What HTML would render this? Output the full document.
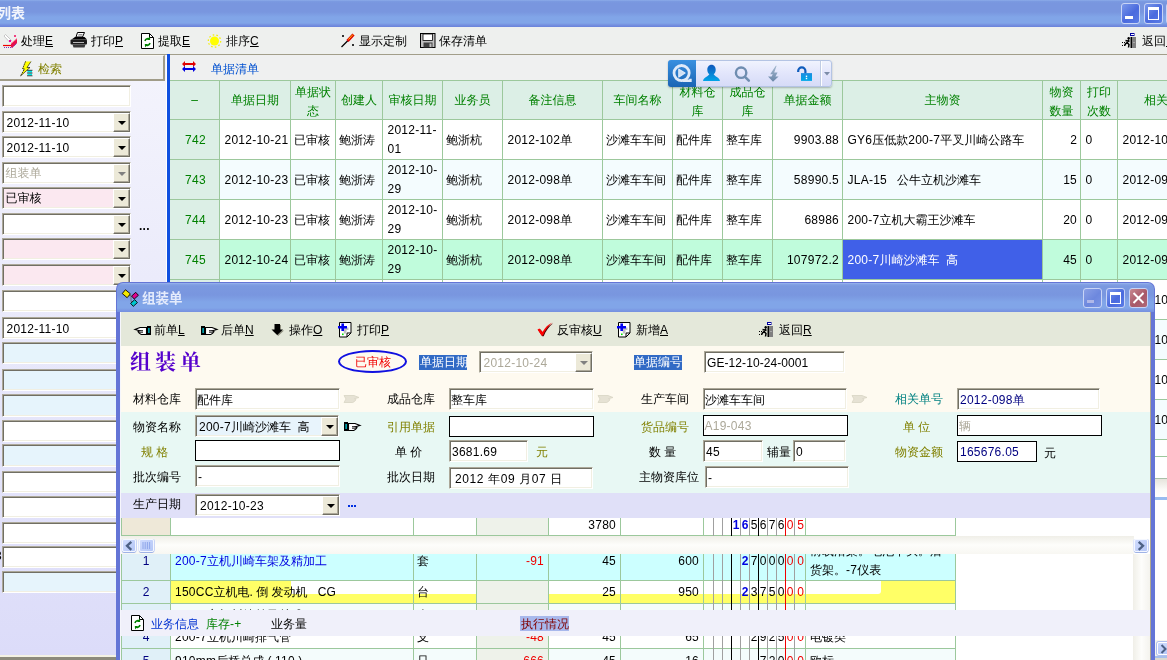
<!DOCTYPE html><html lang="zh"><head><meta charset="utf-8"><title>列表</title><style>
html,body{margin:0;padding:0;}
body{will-change:transform;width:1167px;height:660px;overflow:hidden;position:relative;background:#e0e0fa;
 font-family:"Liberation Sans","WenQuanYi Zen Hei","Noto Sans CJK SC",sans-serif;font-size:12px;color:#000;line-height:14px;}
div{position:absolute;box-sizing:border-box;white-space:nowrap;}
.t{line-height:14px;height:14px;}
u{text-decoration:underline;}
.sunk{border:1px solid;border-color:#aca899 #fff #fff #aca899;box-shadow:inset 1px 1px 0 #716f64,inset -1px -1px 0 #f1efe2;background:#fff;overflow:hidden;}
.flat{border:1px solid #000;background:#fff;overflow:hidden;}
.cb{background:#ece9d8;border:1px solid;border-color:#fff #716f64 #716f64 #fff;box-shadow:inset -1px -1px 0 #aca899;}
.cb:after{content:"";position:absolute;left:3.500px;top:7px;border:4px solid transparent;border-top:4.500px solid #000;border-bottom:0;}
.cb.dis:after{border-top-color:#808080;}
.ft{left:4px;top:3px;}
.ls{}
i{font-style:normal;letter-spacing:.25px;}
span i{letter-spacing:inherit;}
.gh{color:#008000;text-align:center;}
.gc{overflow:hidden;}
svg{position:absolute;overflow:visible;}
</style></head><body>
<div style="left:0px;top:0px;width:1167px;height:27px;background:linear-gradient(#8cace9 0,#7b9ae1 1.500px,#7996df 3px,#7996df 12px,#81a5e8 17px,#81a5e8 23px,#7590e0 25px,#6a82da 27px);"></div>
<div class="t" style="left:-3px;top:5px;font-family:'Liberation Sans','Noto Sans CJK SC',sans-serif;color:#fff;font-weight:bold;font-size:14px;line-height:16px;height:16px;opacity:.9">列表</div>
<div style="left:1121px;top:3px;width:19px;height:21px;background:linear-gradient(135deg,#7a98ea,#4a6ade 55%,#5a7ce6);border:1px solid #c8d4f6;border-radius:3px;"></div>
<div style="left:1125px;top:16px;width:8px;height:3px;background:#fff;"></div>
<div style="left:1144px;top:3px;width:19px;height:21px;background:linear-gradient(135deg,#7a98ea,#4a6ade 55%,#5a7ce6);border:1px solid #c8d4f6;border-radius:3px;"></div>
<div style="left:1148px;top:7px;width:11px;height:13px;border:1px solid #fff;border-top:3px solid #fff;"></div>
<div style="left:1166px;top:3px;width:19px;height:21px;background:linear-gradient(135deg,#c88890,#a85868 55%,#b06878);border:1px solid #c8d4f6;border-radius:3px;"></div>
<svg style="left:1166px;top:3px" width="19" height="21"><path d="M4.500 5 L14.5 16 M14.5 5 L4.500 16" stroke="#fff" stroke-width="2" fill="none"/></svg>
<div style="left:0px;top:27px;width:1167px;height:27px;background:#eef0ee;"></div>
<div style="left:0px;top:54px;width:1167px;height:1px;background:#a29e8a;"></div>
<svg style="left:3px;top:34px" width="15" height="14"><path d="M0 11.500h8" stroke="#f00000" stroke-width="1.200"/><path d="M1 13.500h7" stroke="#8030c0" stroke-width="1.200" stroke-dasharray="1 1"/><path d="M8 9.500L14 4.500V9L9.500 13.500H8z" fill="#e8104c"/><path d="M8 9.500L14 4.500" stroke="#ff80a0" stroke-width="1"/><path d="M9.500 13.500L14 9" stroke="#6020c0" stroke-width="1" stroke-dasharray="1 1"/><path d="M2.500 .5L8.500 6.500 6.500 8 1 2z" fill="#fff" stroke="#b0b0b0" stroke-width=".7"/><rect x="6" y="6" width="2" height="2" fill="#f000a0"/><rect x="11" y="1" width="2" height="2" fill="#f04080"/></svg>
<div class="t" style="left:21px;top:34px;">处理<u>E</u></div>
<svg style="left:70px;top:32px" width="18" height="16"><path d="M6 5L7.500 .5H14.500L12.500 5z" fill="#fff" stroke="#000" stroke-width="1"/><path d="M8.500 2.500h4M8 4h4" stroke="#666" stroke-width=".7"/><path d="M1.500 7.500L5 5h9.500L17 7.500z" fill="#000"/><rect x=".5" y="7.500" width="16.500" height="5" rx="1" fill="#1c1c1c"/><path d="M3 10.500h11" stroke="#b8b8b8" stroke-width="1"/><path d="M2.500 12.500h13l-1 3H3.500z" fill="#3a3a3a"/></svg>
<div class="t" style="left:91px;top:34px;">打印<u>P</u></div>
<svg style="left:141px;top:33px" width="14" height="16"><path d="M.5 .5h8l4 4v11h-12z" fill="#fff" stroke="#000"/><path d="M8.500 .5v4h4" fill="none" stroke="#000"/><path d="M4 8a3 3 0 0 1 5-1.500M9 10a3 3 0 0 1-5 1.500" stroke="#008000" stroke-width="1.600" fill="none"/><path d="M9 3.500v3.500h-3zM4 14.500v-3.500h3z" fill="#008000"/></svg>
<div class="t" style="left:158px;top:34px;">提取<u>E</u></div>
<svg style="left:207px;top:34px" width="15" height="14"><circle cx="7.500" cy="7" r="4.500" fill="#ffff00"/><path d="M10.500 4a4.500 4.500 0 0 1-5.500 7a4.500 4.500 0 0 0 5.500-7z" fill="#808000"/><circle cx="7.500" cy="7" r="6.200" fill="none" stroke="#f4f000" stroke-width="1.200" stroke-dasharray="1.600 2.200"/></svg>
<div class="t" style="left:226px;top:34px;">排序<u>C</u></div>
<svg style="left:341px;top:33px" width="15" height="15"><path d="M0.500 14L7 7.500" stroke="#000" stroke-width="1.300"/><path d="M6.500 8L12.500 1.500" stroke="#e00000" stroke-width="3"/><path d="M7.500 6.500L12 1.500" stroke="#ffd000" stroke-width="1"/><path d="M1 2l2 2M3 2L1 4M11 11l2 2M13 11l-2 2" stroke="#000" stroke-width=".8"/></svg>
<div class="t" style="left:359px;top:34px;">显示定制</div>
<svg style="left:420px;top:33px" width="16" height="15"><rect x=".5" y=".5" width="14.500" height="14" fill="#c0c0c0" stroke="#000"/><rect x="3" y="1" width="9.500" height="6.500" fill="#fff" stroke="#000" stroke-width=".8"/><rect x="3.500" y="9.500" width="9" height="5" fill="#404040"/><rect x="9.500" y="10.500" width="2" height="3.500" fill="#c0c0c0"/></svg>
<div class="t" style="left:439px;top:34px;">保存清单</div>
<svg style="left:1122px;top:33px" width="14" height="15"><rect x="8.500" y=".5" width="3.500" height="2" fill="#fff" stroke="#0000a0"/><rect x="8.500" y="4" width="1.500" height="11" fill="#000"/><rect x="10" y="4" width="4" height="11" fill="#808080"/><rect x="11.500" y="9" width="1" height="1" fill="#d0d0d0"/><circle cx="6.700" cy="5.200" r="1.200" fill="#000"/><path d="M7 6.500L5 9.500M3.500 7.500L7.500 8.500M5 9.500L7 11.500 6.500 14.500M5 9.500L3 11.500 3.500 12.500" stroke="#000" stroke-width="1.500" fill="none"/><path d="M0 9.500h1M2 9.500h1M0 12.500h1M2 12.500h1" stroke="#000"/></svg>
<div class="t" style="left:1142px;top:34px;">返回<u>R</u></div>
<div style="left:0px;top:55px;width:166px;height:605px;background:linear-gradient(#f3f3fc 25px,#dcdcf9 599px);"></div>
<div style="left:0px;top:655px;width:166px;height:2px;background:#f4f2e4;"></div>
<div style="left:0px;top:657px;width:166px;height:3px;background:#8c8a7c;"></div>
<div class="t" style="left:-5px;top:549px;">3</div>
<div style="left:0px;top:55px;width:165px;height:26px;background:#eff0f0;border:1px solid;border-color:#f8f8f4 #a09c88 #a09c88 #f8f8f4;border-width:1px 2px 2px 0"></div>
<svg style="left:19px;top:61px" width="14" height="16"><path d="M6.500 .5H12L8 6.500H11L1.500 15 5.500 8H3.500z" fill="#ffff00"/><path d="M6.500 .5L3.500 8H5.500L1.500 15" fill="none" stroke="#000" stroke-width="1" stroke-dasharray="1.200 1"/><path d="M12 .5L8 6.500H11L1.500 15" fill="none" stroke="#000" stroke-width=".6"/><path d="M8.500 10.500h4.500M8.500 13.500h4.500" stroke="#00e8e8" stroke-width="2"/><path d="M8 9.300h5.500M8 12h5.500M8 14.800h5.500" stroke="#000" stroke-width=".7"/></svg>
<div class="t" style="left:38px;top:62px;color:#808000">检索</div>
<div class="sunk" style="left:2px;top:85px;width:129px;height:22px;background:#fff;"></div>
<div class="sunk" style="left:2px;top:111px;width:129px;height:22px;background:#fff;"><div class="t ft ls" style="left:3.5px;top:4px;color:#000"><i>2012-11-10</i></div><div class="cb" style="right:0;top:1px;width:17px;height:19px"></div></div>
<div class="sunk" style="left:2px;top:136px;width:129px;height:22px;background:#fff;"><div class="t ft ls" style="left:3.5px;top:4px;color:#000"><i>2012-11-10</i></div><div class="cb" style="right:0;top:1px;width:17px;height:19px"></div></div>
<div class="sunk" style="left:2px;top:162px;width:129px;height:22px;background:#fff;"><div class="t ft ls" style="left:2.5px;top:3px;color:#aca899">组装单</div><div class="cb dis" style="right:0;top:1px;width:17px;height:19px"></div></div>
<div class="sunk" style="left:2px;top:187px;width:129px;height:22px;background:#fbe8f0;"><div class="t ft ls" style="left:2.5px;top:3px;color:#000">已审核</div><div class="cb" style="right:0;top:1px;width:17px;height:19px"></div></div>
<div class="sunk" style="left:2px;top:213px;width:129px;height:22px;background:#fff;"><div class="cb" style="right:0;top:1px;width:17px;height:19px"></div></div>
<div class="sunk" style="left:2px;top:238px;width:129px;height:22px;background:#fbe8f0;"><div class="cb" style="right:0;top:1px;width:17px;height:19px"></div></div>
<div class="sunk" style="left:2px;top:264px;width:129px;height:22px;background:#fbe8f0;"><div class="cb" style="right:0;top:1px;width:17px;height:19px"></div></div>
<div class="sunk" style="left:2px;top:290px;width:129px;height:22px;background:#fff;"></div>
<div class="sunk" style="left:2px;top:317px;width:129px;height:22px;background:#fff;"><div class="t ft ls" style="left:3.5px;top:4px;color:#000"><i>2012-11-10</i></div></div>
<div class="sunk" style="left:2px;top:342px;width:129px;height:22px;background:#e6f4fc;"></div>
<div class="sunk" style="left:2px;top:369px;width:129px;height:22px;background:#e6f4fc;"></div>
<div class="sunk" style="left:2px;top:394px;width:129px;height:23px;background:#e6f4fc;"></div>
<div class="sunk" style="left:2px;top:420px;width:129px;height:22px;background:#fff;"></div>
<div class="sunk" style="left:2px;top:444px;width:129px;height:23px;background:#e6f4fc;"></div>
<div class="sunk" style="left:2px;top:471px;width:129px;height:22px;background:#fff;"></div>
<div class="sunk" style="left:2px;top:496px;width:129px;height:22px;background:#fff;"></div>
<div class="sunk" style="left:2px;top:522px;width:129px;height:22px;background:#fff;"></div>
<div class="sunk" style="left:2px;top:546px;width:129px;height:22px;background:#fff;"></div>
<div class="sunk" style="left:2px;top:571px;width:129px;height:22px;background:#e6f4fc;"></div>
<div class="t" style="left:139px;top:219px;font-weight:bold"><i>...</i></div>
<div style="left:166px;top:55px;width:1px;height:605px;background:#fff;"></div>
<div style="left:167px;top:54px;width:3px;height:606px;background:#1050e0;"></div>
<div style="left:170px;top:55px;width:997px;height:25px;background:#eff0f0;"></div>
<svg style="left:182px;top:61px" width="14" height="12"><path d="M3 3h9M3 8h9" stroke-width="2" stroke="#e00000"/><path d="M3 8h9" stroke-width="2" stroke="#0000e0"/><path d="M0 3l3-3v6zM14 3l-3-3v6z" fill="#e00000"/><path d="M0 8l3-3v6zM14 8l-3-3v6z" fill="#0000e0"/></svg>
<div class="t" style="left:211px;top:62px;color:#0050d0">单据清单</div>
<div style="left:170px;top:80px;width:997px;height:580px;background:#fff;"></div>
<div class="gc" style="left:170px;top:80px;width:50px;height:40px;background:#dcefe6;border-right:1px solid #9cc89c;border-bottom:1px solid #9cc89c;border-top:1px solid #9cc89c;"><div class="gh" style="left:0;width:49px;top:10px;line-height:19px;">–</div></div>
<div class="gc" style="left:220px;top:80px;width:71px;height:40px;background:#dcefe6;border-right:1px solid #9cc89c;border-bottom:1px solid #9cc89c;border-top:1px solid #9cc89c;"><div class="gh" style="left:0;width:70px;top:10px;line-height:19px;">单据日期</div></div>
<div class="gc" style="left:291px;top:80px;width:45px;height:40px;background:#dcefe6;border-right:1px solid #9cc89c;border-bottom:1px solid #9cc89c;border-top:1px solid #9cc89c;"><div class="gh" style="left:0;width:44px;top:2px;line-height:19px;">单据状<br>态</div></div>
<div class="gc" style="left:336px;top:80px;width:47px;height:40px;background:#dcefe6;border-right:1px solid #9cc89c;border-bottom:1px solid #9cc89c;border-top:1px solid #9cc89c;"><div class="gh" style="left:0;width:46px;top:10px;line-height:19px;">创建人</div></div>
<div class="gc" style="left:383px;top:80px;width:60px;height:40px;background:#dcefe6;border-right:1px solid #9cc89c;border-bottom:1px solid #9cc89c;border-top:1px solid #9cc89c;"><div class="gh" style="left:0;width:59px;top:10px;line-height:19px;">审核日期</div></div>
<div class="gc" style="left:443px;top:80px;width:60px;height:40px;background:#dcefe6;border-right:1px solid #9cc89c;border-bottom:1px solid #9cc89c;border-top:1px solid #9cc89c;"><div class="gh" style="left:0;width:59px;top:10px;line-height:19px;">业务员</div></div>
<div class="gc" style="left:503px;top:80px;width:100px;height:40px;background:#dcefe6;border-right:1px solid #9cc89c;border-bottom:1px solid #9cc89c;border-top:1px solid #9cc89c;"><div class="gh" style="left:0;width:99px;top:10px;line-height:19px;">备注信息</div></div>
<div class="gc" style="left:603px;top:80px;width:70px;height:40px;background:#dcefe6;border-right:1px solid #9cc89c;border-bottom:1px solid #9cc89c;border-top:1px solid #9cc89c;"><div class="gh" style="left:0;width:69px;top:10px;line-height:19px;">车间名称</div></div>
<div class="gc" style="left:673px;top:80px;width:50px;height:40px;background:#dcefe6;border-right:1px solid #9cc89c;border-bottom:1px solid #9cc89c;border-top:1px solid #9cc89c;"><div class="gh" style="left:0;width:49px;top:2px;line-height:19px;">材料仓<br>库</div></div>
<div class="gc" style="left:723px;top:80px;width:50px;height:40px;background:#dcefe6;border-right:1px solid #9cc89c;border-bottom:1px solid #9cc89c;border-top:1px solid #9cc89c;"><div class="gh" style="left:0;width:49px;top:2px;line-height:19px;">成品仓<br>库</div></div>
<div class="gc" style="left:773px;top:80px;width:70px;height:40px;background:#dcefe6;border-right:1px solid #9cc89c;border-bottom:1px solid #9cc89c;border-top:1px solid #9cc89c;"><div class="gh" style="left:0;width:69px;top:10px;line-height:19px;">单据金额</div></div>
<div class="gc" style="left:843px;top:80px;width:200px;height:40px;background:#dcefe6;border-right:1px solid #9cc89c;border-bottom:1px solid #9cc89c;border-top:1px solid #9cc89c;"><div class="gh" style="left:0;width:199px;top:10px;line-height:19px;">主物资</div></div>
<div class="gc" style="left:1043px;top:80px;width:38px;height:40px;background:#dcefe6;border-right:1px solid #9cc89c;border-bottom:1px solid #9cc89c;border-top:1px solid #9cc89c;"><div class="gh" style="left:0;width:37px;top:2px;line-height:19px;">物资<br>数量</div></div>
<div class="gc" style="left:1081px;top:80px;width:37px;height:40px;background:#dcefe6;border-right:1px solid #9cc89c;border-bottom:1px solid #9cc89c;border-top:1px solid #9cc89c;"><div class="gh" style="left:0;width:36px;top:2px;line-height:19px;">打印<br>次数</div></div>
<div class="gc" style="left:1118px;top:80px;width:101px;height:40px;background:#dcefe6;border-right:1px solid #9cc89c;border-bottom:1px solid #9cc89c;border-top:1px solid #9cc89c;"><div class="gh" style="left:0;width:100px;top:10px;line-height:19px;">相关单号</div></div>
<div class="gc" style="left:170px;top:120px;width:50px;height:40px;background:#dcefe6;border-right:1px solid #9cc89c;border-bottom:1px solid #9cc89c;"><div style="left:0;width:49px;top:10px;line-height:20px;text-align:center;padding-left:2px;color:#008000"><i>742</i></div></div>
<div class="gc" style="left:220px;top:120px;width:71px;height:40px;background:#fff;border-right:1px solid #9cc89c;border-bottom:1px solid #9cc89c;"><div style="left:0;width:70px;top:10px;line-height:20px;text-align:left;padding-left:4.500px;color:#000"><i>2012-10-21</i></div></div>
<div class="gc" style="left:291px;top:120px;width:45px;height:40px;background:#fff;border-right:1px solid #9cc89c;border-bottom:1px solid #9cc89c;"><div style="left:0;width:44px;top:10px;line-height:20px;text-align:left;padding-left:3px;color:#000">已审核</div></div>
<div class="gc" style="left:336px;top:120px;width:47px;height:40px;background:#fff;border-right:1px solid #9cc89c;border-bottom:1px solid #9cc89c;"><div style="left:0;width:46px;top:10px;line-height:20px;text-align:left;padding-left:3px;color:#000">鲍浙涛</div></div>
<div class="gc" style="left:383px;top:120px;width:60px;height:40px;background:#fff;border-right:1px solid #9cc89c;border-bottom:1px solid #9cc89c;"><div style="left:0;width:59px;top:0.5px;line-height:19px;text-align:left;padding-left:4.500px;color:#000"><i>2012-11-</i><br><i>01</i></div></div>
<div class="gc" style="left:443px;top:120px;width:60px;height:40px;background:#fff;border-right:1px solid #9cc89c;border-bottom:1px solid #9cc89c;"><div style="left:0;width:59px;top:10px;line-height:20px;text-align:left;padding-left:3px;color:#000">鲍浙杭</div></div>
<div class="gc" style="left:503px;top:120px;width:100px;height:40px;background:#fff;border-right:1px solid #9cc89c;border-bottom:1px solid #9cc89c;"><div style="left:0;width:99px;top:10px;line-height:20px;text-align:left;padding-left:4.500px;color:#000"><i>2012-102</i>单</div></div>
<div class="gc" style="left:603px;top:120px;width:70px;height:40px;background:#fff;border-right:1px solid #9cc89c;border-bottom:1px solid #9cc89c;"><div style="left:0;width:69px;top:10px;line-height:20px;text-align:left;padding-left:3px;color:#000">沙滩车车间</div></div>
<div class="gc" style="left:673px;top:120px;width:50px;height:40px;background:#fff;border-right:1px solid #9cc89c;border-bottom:1px solid #9cc89c;"><div style="left:0;width:49px;top:10px;line-height:20px;text-align:left;padding-left:3px;color:#000">配件库</div></div>
<div class="gc" style="left:723px;top:120px;width:50px;height:40px;background:#fff;border-right:1px solid #9cc89c;border-bottom:1px solid #9cc89c;"><div style="left:0;width:49px;top:10px;line-height:20px;text-align:left;padding-left:3px;color:#000">整车库</div></div>
<div class="gc" style="left:773px;top:120px;width:70px;height:40px;background:#fff;border-right:1px solid #9cc89c;border-bottom:1px solid #9cc89c;"><div style="left:0;width:69px;top:10px;line-height:20px;text-align:right;padding-right:3px;color:#000"><i>9903.88</i></div></div>
<div class="gc" style="left:843px;top:120px;width:200px;height:40px;background:#fff;border-right:1px solid #9cc89c;border-bottom:1px solid #9cc89c;"><div style="left:0;width:199px;top:10px;line-height:20px;text-align:left;padding-left:4.500px;color:#000"><i>GY6</i>压低款<i>200-7</i>平叉川崎公路车</div></div>
<div class="gc" style="left:1043px;top:120px;width:38px;height:40px;background:#fff;border-right:1px solid #9cc89c;border-bottom:1px solid #9cc89c;"><div style="left:0;width:37px;top:10px;line-height:20px;text-align:right;padding-right:3px;color:#000">2</div></div>
<div class="gc" style="left:1081px;top:120px;width:37px;height:40px;background:#fff;border-right:1px solid #9cc89c;border-bottom:1px solid #9cc89c;"><div style="left:0;width:36px;top:10px;line-height:20px;text-align:left;padding-left:4.500px;color:#000">0</div></div>
<div class="gc" style="left:1118px;top:120px;width:101px;height:40px;background:#fff;border-right:1px solid #9cc89c;border-bottom:1px solid #9cc89c;"><div style="left:0;width:100px;top:10px;line-height:20px;text-align:left;padding-left:4.500px;color:#000"><i>2012-10</i></div></div>
<div class="gc" style="left:170px;top:160px;width:50px;height:40px;background:#dcefe6;border-right:1px solid #9cc89c;border-bottom:1px solid #9cc89c;"><div style="left:0;width:49px;top:10px;line-height:20px;text-align:center;padding-left:2px;color:#008000"><i>743</i></div></div>
<div class="gc" style="left:220px;top:160px;width:71px;height:40px;background:#f4fcfe;border-right:1px solid #9cc89c;border-bottom:1px solid #9cc89c;"><div style="left:0;width:70px;top:10px;line-height:20px;text-align:left;padding-left:4.500px;color:#000"><i>2012-10-23</i></div></div>
<div class="gc" style="left:291px;top:160px;width:45px;height:40px;background:#f4fcfe;border-right:1px solid #9cc89c;border-bottom:1px solid #9cc89c;"><div style="left:0;width:44px;top:10px;line-height:20px;text-align:left;padding-left:3px;color:#000">已审核</div></div>
<div class="gc" style="left:336px;top:160px;width:47px;height:40px;background:#f4fcfe;border-right:1px solid #9cc89c;border-bottom:1px solid #9cc89c;"><div style="left:0;width:46px;top:10px;line-height:20px;text-align:left;padding-left:3px;color:#000">鲍浙涛</div></div>
<div class="gc" style="left:383px;top:160px;width:60px;height:40px;background:#f4fcfe;border-right:1px solid #9cc89c;border-bottom:1px solid #9cc89c;"><div style="left:0;width:59px;top:0.5px;line-height:19px;text-align:left;padding-left:4.500px;color:#000"><i>2012-10-</i><br><i>29</i></div></div>
<div class="gc" style="left:443px;top:160px;width:60px;height:40px;background:#f4fcfe;border-right:1px solid #9cc89c;border-bottom:1px solid #9cc89c;"><div style="left:0;width:59px;top:10px;line-height:20px;text-align:left;padding-left:3px;color:#000">鲍浙杭</div></div>
<div class="gc" style="left:503px;top:160px;width:100px;height:40px;background:#f4fcfe;border-right:1px solid #9cc89c;border-bottom:1px solid #9cc89c;"><div style="left:0;width:99px;top:10px;line-height:20px;text-align:left;padding-left:4.500px;color:#000"><i>2012-098</i>单</div></div>
<div class="gc" style="left:603px;top:160px;width:70px;height:40px;background:#f4fcfe;border-right:1px solid #9cc89c;border-bottom:1px solid #9cc89c;"><div style="left:0;width:69px;top:10px;line-height:20px;text-align:left;padding-left:3px;color:#000">沙滩车车间</div></div>
<div class="gc" style="left:673px;top:160px;width:50px;height:40px;background:#f4fcfe;border-right:1px solid #9cc89c;border-bottom:1px solid #9cc89c;"><div style="left:0;width:49px;top:10px;line-height:20px;text-align:left;padding-left:3px;color:#000">配件库</div></div>
<div class="gc" style="left:723px;top:160px;width:50px;height:40px;background:#f4fcfe;border-right:1px solid #9cc89c;border-bottom:1px solid #9cc89c;"><div style="left:0;width:49px;top:10px;line-height:20px;text-align:left;padding-left:3px;color:#000">整车库</div></div>
<div class="gc" style="left:773px;top:160px;width:70px;height:40px;background:#f4fcfe;border-right:1px solid #9cc89c;border-bottom:1px solid #9cc89c;"><div style="left:0;width:69px;top:10px;line-height:20px;text-align:right;padding-right:3px;color:#000"><i>58990.5</i></div></div>
<div class="gc" style="left:843px;top:160px;width:200px;height:40px;background:#f4fcfe;border-right:1px solid #9cc89c;border-bottom:1px solid #9cc89c;"><div style="left:0;width:199px;top:10px;line-height:20px;text-align:left;padding-left:4.500px;color:#000"><i>JLA-15</i> &nbsp; 公牛立机沙滩车</div></div>
<div class="gc" style="left:1043px;top:160px;width:38px;height:40px;background:#f4fcfe;border-right:1px solid #9cc89c;border-bottom:1px solid #9cc89c;"><div style="left:0;width:37px;top:10px;line-height:20px;text-align:right;padding-right:3px;color:#000"><i>15</i></div></div>
<div class="gc" style="left:1081px;top:160px;width:37px;height:40px;background:#f4fcfe;border-right:1px solid #9cc89c;border-bottom:1px solid #9cc89c;"><div style="left:0;width:36px;top:10px;line-height:20px;text-align:left;padding-left:4.500px;color:#000">0</div></div>
<div class="gc" style="left:1118px;top:160px;width:101px;height:40px;background:#f4fcfe;border-right:1px solid #9cc89c;border-bottom:1px solid #9cc89c;"><div style="left:0;width:100px;top:10px;line-height:20px;text-align:left;padding-left:4.500px;color:#000"><i>2012-09</i></div></div>
<div class="gc" style="left:170px;top:200px;width:50px;height:40px;background:#dcefe6;border-right:1px solid #9cc89c;border-bottom:1px solid #9cc89c;"><div style="left:0;width:49px;top:10px;line-height:20px;text-align:center;padding-left:2px;color:#008000"><i>744</i></div></div>
<div class="gc" style="left:220px;top:200px;width:71px;height:40px;background:#fff;border-right:1px solid #9cc89c;border-bottom:1px solid #9cc89c;"><div style="left:0;width:70px;top:10px;line-height:20px;text-align:left;padding-left:4.500px;color:#000"><i>2012-10-23</i></div></div>
<div class="gc" style="left:291px;top:200px;width:45px;height:40px;background:#fff;border-right:1px solid #9cc89c;border-bottom:1px solid #9cc89c;"><div style="left:0;width:44px;top:10px;line-height:20px;text-align:left;padding-left:3px;color:#000">已审核</div></div>
<div class="gc" style="left:336px;top:200px;width:47px;height:40px;background:#fff;border-right:1px solid #9cc89c;border-bottom:1px solid #9cc89c;"><div style="left:0;width:46px;top:10px;line-height:20px;text-align:left;padding-left:3px;color:#000">鲍浙涛</div></div>
<div class="gc" style="left:383px;top:200px;width:60px;height:40px;background:#fff;border-right:1px solid #9cc89c;border-bottom:1px solid #9cc89c;"><div style="left:0;width:59px;top:0.5px;line-height:19px;text-align:left;padding-left:4.500px;color:#000"><i>2012-10-</i><br><i>29</i></div></div>
<div class="gc" style="left:443px;top:200px;width:60px;height:40px;background:#fff;border-right:1px solid #9cc89c;border-bottom:1px solid #9cc89c;"><div style="left:0;width:59px;top:10px;line-height:20px;text-align:left;padding-left:3px;color:#000">鲍浙杭</div></div>
<div class="gc" style="left:503px;top:200px;width:100px;height:40px;background:#fff;border-right:1px solid #9cc89c;border-bottom:1px solid #9cc89c;"><div style="left:0;width:99px;top:10px;line-height:20px;text-align:left;padding-left:4.500px;color:#000"><i>2012-098</i>单</div></div>
<div class="gc" style="left:603px;top:200px;width:70px;height:40px;background:#fff;border-right:1px solid #9cc89c;border-bottom:1px solid #9cc89c;"><div style="left:0;width:69px;top:10px;line-height:20px;text-align:left;padding-left:3px;color:#000">沙滩车车间</div></div>
<div class="gc" style="left:673px;top:200px;width:50px;height:40px;background:#fff;border-right:1px solid #9cc89c;border-bottom:1px solid #9cc89c;"><div style="left:0;width:49px;top:10px;line-height:20px;text-align:left;padding-left:3px;color:#000">配件库</div></div>
<div class="gc" style="left:723px;top:200px;width:50px;height:40px;background:#fff;border-right:1px solid #9cc89c;border-bottom:1px solid #9cc89c;"><div style="left:0;width:49px;top:10px;line-height:20px;text-align:left;padding-left:3px;color:#000">整车库</div></div>
<div class="gc" style="left:773px;top:200px;width:70px;height:40px;background:#fff;border-right:1px solid #9cc89c;border-bottom:1px solid #9cc89c;"><div style="left:0;width:69px;top:10px;line-height:20px;text-align:right;padding-right:3px;color:#000"><i>68986</i></div></div>
<div class="gc" style="left:843px;top:200px;width:200px;height:40px;background:#fff;border-right:1px solid #9cc89c;border-bottom:1px solid #9cc89c;"><div style="left:0;width:199px;top:10px;line-height:20px;text-align:left;padding-left:4.500px;color:#000"><i>200-7</i>立机大霸王沙滩车</div></div>
<div class="gc" style="left:1043px;top:200px;width:38px;height:40px;background:#fff;border-right:1px solid #9cc89c;border-bottom:1px solid #9cc89c;"><div style="left:0;width:37px;top:10px;line-height:20px;text-align:right;padding-right:3px;color:#000"><i>20</i></div></div>
<div class="gc" style="left:1081px;top:200px;width:37px;height:40px;background:#fff;border-right:1px solid #9cc89c;border-bottom:1px solid #9cc89c;"><div style="left:0;width:36px;top:10px;line-height:20px;text-align:left;padding-left:4.500px;color:#000">0</div></div>
<div class="gc" style="left:1118px;top:200px;width:101px;height:40px;background:#fff;border-right:1px solid #9cc89c;border-bottom:1px solid #9cc89c;"><div style="left:0;width:100px;top:10px;line-height:20px;text-align:left;padding-left:4.500px;color:#000"><i>2012-09</i></div></div>
<div class="gc" style="left:170px;top:240px;width:50px;height:40px;background:#dcefe6;border-right:1px solid #9cc89c;border-bottom:1px solid #9cc89c;"><div style="left:0;width:49px;top:10px;line-height:20px;text-align:center;padding-left:2px;color:#008000"><i>745</i></div></div>
<div class="gc" style="left:220px;top:240px;width:71px;height:40px;background:#c0fcdc;border-right:1px solid #9cc89c;border-bottom:1px solid #9cc89c;"><div style="left:0;width:70px;top:10px;line-height:20px;text-align:left;padding-left:4.500px;color:#000"><i>2012-10-24</i></div></div>
<div class="gc" style="left:291px;top:240px;width:45px;height:40px;background:#c0fcdc;border-right:1px solid #9cc89c;border-bottom:1px solid #9cc89c;"><div style="left:0;width:44px;top:10px;line-height:20px;text-align:left;padding-left:3px;color:#000">已审核</div></div>
<div class="gc" style="left:336px;top:240px;width:47px;height:40px;background:#c0fcdc;border-right:1px solid #9cc89c;border-bottom:1px solid #9cc89c;"><div style="left:0;width:46px;top:10px;line-height:20px;text-align:left;padding-left:3px;color:#000">鲍浙涛</div></div>
<div class="gc" style="left:383px;top:240px;width:60px;height:40px;background:#c0fcdc;border-right:1px solid #9cc89c;border-bottom:1px solid #9cc89c;"><div style="left:0;width:59px;top:0.5px;line-height:19px;text-align:left;padding-left:4.500px;color:#000"><i>2012-10-</i><br><i>29</i></div></div>
<div class="gc" style="left:443px;top:240px;width:60px;height:40px;background:#c0fcdc;border-right:1px solid #9cc89c;border-bottom:1px solid #9cc89c;"><div style="left:0;width:59px;top:10px;line-height:20px;text-align:left;padding-left:3px;color:#000">鲍浙杭</div></div>
<div class="gc" style="left:503px;top:240px;width:100px;height:40px;background:#c0fcdc;border-right:1px solid #9cc89c;border-bottom:1px solid #9cc89c;"><div style="left:0;width:99px;top:10px;line-height:20px;text-align:left;padding-left:4.500px;color:#000"><i>2012-098</i>单</div></div>
<div class="gc" style="left:603px;top:240px;width:70px;height:40px;background:#c0fcdc;border-right:1px solid #9cc89c;border-bottom:1px solid #9cc89c;"><div style="left:0;width:69px;top:10px;line-height:20px;text-align:left;padding-left:3px;color:#000">沙滩车车间</div></div>
<div class="gc" style="left:673px;top:240px;width:50px;height:40px;background:#c0fcdc;border-right:1px solid #9cc89c;border-bottom:1px solid #9cc89c;"><div style="left:0;width:49px;top:10px;line-height:20px;text-align:left;padding-left:3px;color:#000">配件库</div></div>
<div class="gc" style="left:723px;top:240px;width:50px;height:40px;background:#c0fcdc;border-right:1px solid #9cc89c;border-bottom:1px solid #9cc89c;"><div style="left:0;width:49px;top:10px;line-height:20px;text-align:left;padding-left:3px;color:#000">整车库</div></div>
<div class="gc" style="left:773px;top:240px;width:70px;height:40px;background:#c0fcdc;border-right:1px solid #9cc89c;border-bottom:1px solid #9cc89c;"><div style="left:0;width:69px;top:10px;line-height:20px;text-align:right;padding-right:3px;color:#000"><i>107972.2</i></div></div>
<div class="gc" style="left:843px;top:240px;width:200px;height:40px;background:#4060e8;border-right:1px solid #9cc89c;border-bottom:1px solid #9cc89c;"><div style="left:0;width:199px;top:10px;line-height:20px;text-align:left;padding-left:4.500px;color:#fff"><i>200-7</i>川崎沙滩车 &nbsp;高</div></div>
<div class="gc" style="left:1043px;top:240px;width:38px;height:40px;background:#c0fcdc;border-right:1px solid #9cc89c;border-bottom:1px solid #9cc89c;"><div style="left:0;width:37px;top:10px;line-height:20px;text-align:right;padding-right:3px;color:#000"><i>45</i></div></div>
<div class="gc" style="left:1081px;top:240px;width:37px;height:40px;background:#c0fcdc;border-right:1px solid #9cc89c;border-bottom:1px solid #9cc89c;"><div style="left:0;width:36px;top:10px;line-height:20px;text-align:left;padding-left:4.500px;color:#000">0</div></div>
<div class="gc" style="left:1118px;top:240px;width:101px;height:40px;background:#c0fcdc;border-right:1px solid #9cc89c;border-bottom:1px solid #9cc89c;"><div style="left:0;width:100px;top:10px;line-height:20px;text-align:left;padding-left:4.500px;color:#000"><i>2012-09</i></div></div>
<div class="gc" style="left:170px;top:280px;width:50px;height:40px;background:#dcefe6;border-right:1px solid #9cc89c;border-bottom:1px solid #9cc89c;"></div>
<div class="gc" style="left:220px;top:280px;width:71px;height:40px;background:#fff;border-right:1px solid #9cc89c;border-bottom:1px solid #9cc89c;"></div>
<div class="gc" style="left:291px;top:280px;width:45px;height:40px;background:#fff;border-right:1px solid #9cc89c;border-bottom:1px solid #9cc89c;"></div>
<div class="gc" style="left:336px;top:280px;width:47px;height:40px;background:#fff;border-right:1px solid #9cc89c;border-bottom:1px solid #9cc89c;"></div>
<div class="gc" style="left:383px;top:280px;width:60px;height:40px;background:#fff;border-right:1px solid #9cc89c;border-bottom:1px solid #9cc89c;"></div>
<div class="gc" style="left:443px;top:280px;width:60px;height:40px;background:#fff;border-right:1px solid #9cc89c;border-bottom:1px solid #9cc89c;"></div>
<div class="gc" style="left:503px;top:280px;width:100px;height:40px;background:#fff;border-right:1px solid #9cc89c;border-bottom:1px solid #9cc89c;"></div>
<div class="gc" style="left:603px;top:280px;width:70px;height:40px;background:#fff;border-right:1px solid #9cc89c;border-bottom:1px solid #9cc89c;"></div>
<div class="gc" style="left:673px;top:280px;width:50px;height:40px;background:#fff;border-right:1px solid #9cc89c;border-bottom:1px solid #9cc89c;"></div>
<div class="gc" style="left:723px;top:280px;width:50px;height:40px;background:#fff;border-right:1px solid #9cc89c;border-bottom:1px solid #9cc89c;"></div>
<div class="gc" style="left:773px;top:280px;width:70px;height:40px;background:#fff;border-right:1px solid #9cc89c;border-bottom:1px solid #9cc89c;"></div>
<div class="gc" style="left:843px;top:280px;width:200px;height:40px;background:#fff;border-right:1px solid #9cc89c;border-bottom:1px solid #9cc89c;"></div>
<div class="gc" style="left:1043px;top:280px;width:38px;height:40px;background:#fff;border-right:1px solid #9cc89c;border-bottom:1px solid #9cc89c;"></div>
<div class="gc" style="left:1081px;top:280px;width:37px;height:40px;background:#fff;border-right:1px solid #9cc89c;border-bottom:1px solid #9cc89c;"></div>
<div class="gc" style="left:1118px;top:280px;width:101px;height:40px;background:#fff;border-right:1px solid #9cc89c;border-bottom:1px solid #9cc89c;"><div style="left:0;top:10px;line-height:20px;padding-left:4.500px;"><i>2012-10</i></div></div>
<div class="gc" style="left:170px;top:320px;width:50px;height:40px;background:#dcefe6;border-right:1px solid #9cc89c;border-bottom:1px solid #9cc89c;"></div>
<div class="gc" style="left:220px;top:320px;width:71px;height:40px;background:#f4fcfe;border-right:1px solid #9cc89c;border-bottom:1px solid #9cc89c;"></div>
<div class="gc" style="left:291px;top:320px;width:45px;height:40px;background:#f4fcfe;border-right:1px solid #9cc89c;border-bottom:1px solid #9cc89c;"></div>
<div class="gc" style="left:336px;top:320px;width:47px;height:40px;background:#f4fcfe;border-right:1px solid #9cc89c;border-bottom:1px solid #9cc89c;"></div>
<div class="gc" style="left:383px;top:320px;width:60px;height:40px;background:#f4fcfe;border-right:1px solid #9cc89c;border-bottom:1px solid #9cc89c;"></div>
<div class="gc" style="left:443px;top:320px;width:60px;height:40px;background:#f4fcfe;border-right:1px solid #9cc89c;border-bottom:1px solid #9cc89c;"></div>
<div class="gc" style="left:503px;top:320px;width:100px;height:40px;background:#f4fcfe;border-right:1px solid #9cc89c;border-bottom:1px solid #9cc89c;"></div>
<div class="gc" style="left:603px;top:320px;width:70px;height:40px;background:#f4fcfe;border-right:1px solid #9cc89c;border-bottom:1px solid #9cc89c;"></div>
<div class="gc" style="left:673px;top:320px;width:50px;height:40px;background:#f4fcfe;border-right:1px solid #9cc89c;border-bottom:1px solid #9cc89c;"></div>
<div class="gc" style="left:723px;top:320px;width:50px;height:40px;background:#f4fcfe;border-right:1px solid #9cc89c;border-bottom:1px solid #9cc89c;"></div>
<div class="gc" style="left:773px;top:320px;width:70px;height:40px;background:#f4fcfe;border-right:1px solid #9cc89c;border-bottom:1px solid #9cc89c;"></div>
<div class="gc" style="left:843px;top:320px;width:200px;height:40px;background:#f4fcfe;border-right:1px solid #9cc89c;border-bottom:1px solid #9cc89c;"></div>
<div class="gc" style="left:1043px;top:320px;width:38px;height:40px;background:#f4fcfe;border-right:1px solid #9cc89c;border-bottom:1px solid #9cc89c;"></div>
<div class="gc" style="left:1081px;top:320px;width:37px;height:40px;background:#f4fcfe;border-right:1px solid #9cc89c;border-bottom:1px solid #9cc89c;"></div>
<div class="gc" style="left:1118px;top:320px;width:101px;height:40px;background:#f4fcfe;border-right:1px solid #9cc89c;border-bottom:1px solid #9cc89c;"><div style="left:0;top:10px;line-height:20px;padding-left:4.500px;"><i>2012-10</i></div></div>
<div class="gc" style="left:170px;top:360px;width:50px;height:40px;background:#dcefe6;border-right:1px solid #9cc89c;border-bottom:1px solid #9cc89c;"></div>
<div class="gc" style="left:220px;top:360px;width:71px;height:40px;background:#fff;border-right:1px solid #9cc89c;border-bottom:1px solid #9cc89c;"></div>
<div class="gc" style="left:291px;top:360px;width:45px;height:40px;background:#fff;border-right:1px solid #9cc89c;border-bottom:1px solid #9cc89c;"></div>
<div class="gc" style="left:336px;top:360px;width:47px;height:40px;background:#fff;border-right:1px solid #9cc89c;border-bottom:1px solid #9cc89c;"></div>
<div class="gc" style="left:383px;top:360px;width:60px;height:40px;background:#fff;border-right:1px solid #9cc89c;border-bottom:1px solid #9cc89c;"></div>
<div class="gc" style="left:443px;top:360px;width:60px;height:40px;background:#fff;border-right:1px solid #9cc89c;border-bottom:1px solid #9cc89c;"></div>
<div class="gc" style="left:503px;top:360px;width:100px;height:40px;background:#fff;border-right:1px solid #9cc89c;border-bottom:1px solid #9cc89c;"></div>
<div class="gc" style="left:603px;top:360px;width:70px;height:40px;background:#fff;border-right:1px solid #9cc89c;border-bottom:1px solid #9cc89c;"></div>
<div class="gc" style="left:673px;top:360px;width:50px;height:40px;background:#fff;border-right:1px solid #9cc89c;border-bottom:1px solid #9cc89c;"></div>
<div class="gc" style="left:723px;top:360px;width:50px;height:40px;background:#fff;border-right:1px solid #9cc89c;border-bottom:1px solid #9cc89c;"></div>
<div class="gc" style="left:773px;top:360px;width:70px;height:40px;background:#fff;border-right:1px solid #9cc89c;border-bottom:1px solid #9cc89c;"></div>
<div class="gc" style="left:843px;top:360px;width:200px;height:40px;background:#fff;border-right:1px solid #9cc89c;border-bottom:1px solid #9cc89c;"></div>
<div class="gc" style="left:1043px;top:360px;width:38px;height:40px;background:#fff;border-right:1px solid #9cc89c;border-bottom:1px solid #9cc89c;"></div>
<div class="gc" style="left:1081px;top:360px;width:37px;height:40px;background:#fff;border-right:1px solid #9cc89c;border-bottom:1px solid #9cc89c;"></div>
<div class="gc" style="left:1118px;top:360px;width:101px;height:40px;background:#fff;border-right:1px solid #9cc89c;border-bottom:1px solid #9cc89c;"><div style="left:0;top:10px;line-height:20px;padding-left:4.500px;"><i>2012-10</i></div></div>
<div class="gc" style="left:170px;top:400px;width:50px;height:40px;background:#dcefe6;border-right:1px solid #9cc89c;border-bottom:1px solid #9cc89c;"></div>
<div class="gc" style="left:220px;top:400px;width:71px;height:40px;background:#f4fcfe;border-right:1px solid #9cc89c;border-bottom:1px solid #9cc89c;"></div>
<div class="gc" style="left:291px;top:400px;width:45px;height:40px;background:#f4fcfe;border-right:1px solid #9cc89c;border-bottom:1px solid #9cc89c;"></div>
<div class="gc" style="left:336px;top:400px;width:47px;height:40px;background:#f4fcfe;border-right:1px solid #9cc89c;border-bottom:1px solid #9cc89c;"></div>
<div class="gc" style="left:383px;top:400px;width:60px;height:40px;background:#f4fcfe;border-right:1px solid #9cc89c;border-bottom:1px solid #9cc89c;"></div>
<div class="gc" style="left:443px;top:400px;width:60px;height:40px;background:#f4fcfe;border-right:1px solid #9cc89c;border-bottom:1px solid #9cc89c;"></div>
<div class="gc" style="left:503px;top:400px;width:100px;height:40px;background:#f4fcfe;border-right:1px solid #9cc89c;border-bottom:1px solid #9cc89c;"></div>
<div class="gc" style="left:603px;top:400px;width:70px;height:40px;background:#f4fcfe;border-right:1px solid #9cc89c;border-bottom:1px solid #9cc89c;"></div>
<div class="gc" style="left:673px;top:400px;width:50px;height:40px;background:#f4fcfe;border-right:1px solid #9cc89c;border-bottom:1px solid #9cc89c;"></div>
<div class="gc" style="left:723px;top:400px;width:50px;height:40px;background:#f4fcfe;border-right:1px solid #9cc89c;border-bottom:1px solid #9cc89c;"></div>
<div class="gc" style="left:773px;top:400px;width:70px;height:40px;background:#f4fcfe;border-right:1px solid #9cc89c;border-bottom:1px solid #9cc89c;"></div>
<div class="gc" style="left:843px;top:400px;width:200px;height:40px;background:#f4fcfe;border-right:1px solid #9cc89c;border-bottom:1px solid #9cc89c;"></div>
<div class="gc" style="left:1043px;top:400px;width:38px;height:40px;background:#f4fcfe;border-right:1px solid #9cc89c;border-bottom:1px solid #9cc89c;"></div>
<div class="gc" style="left:1081px;top:400px;width:37px;height:40px;background:#f4fcfe;border-right:1px solid #9cc89c;border-bottom:1px solid #9cc89c;"></div>
<div class="gc" style="left:1118px;top:400px;width:101px;height:40px;background:#f4fcfe;border-right:1px solid #9cc89c;border-bottom:1px solid #9cc89c;"><div style="left:0;top:10px;line-height:20px;padding-left:4.500px;"><i>2012-10</i></div></div>
<div style="left:1117px;top:440px;width:60px;height:17px;border-bottom:1px solid #9cc89c;background:#fff"></div>
<div style="left:1117px;top:457px;width:60px;height:22px;background:#fff;border-bottom:1px solid #a8c0a8"></div>
<div style="left:1117px;top:479px;width:60px;height:18px;background:linear-gradient(#e6e4dc,#fbfbf8 60%,#fff);"></div>
<div style="left:1117px;top:497px;width:60px;height:3px;background:#98bcf0"></div>
<div style="left:1117px;top:500px;width:60px;height:160px;background:#fff"></div>
<div style="left:1155px;top:640px;width:12px;height:20px;background:#f6f5ee;"></div>
<div style="left:1157px;top:642px;width:14px;height:13px;background:linear-gradient(#cad8fd,#b8c9f8);border:1px solid #fff;border-radius:2px;box-shadow:0 0 0 1px #b0c0f0"></div>
<svg style="left:1160px;top:644px" width="8" height="10"><path d="M1.500 1L5.500 5 1.500 9" stroke="#4d6185" stroke-width="2" fill="none"/></svg>
<div style="left:1155px;top:656px;width:12px;height:2px;background:#a8c0ec"></div>
<div style="left:1155px;top:658px;width:12px;height:2px;background:#dcdad0"></div>
<div style="left:668px;top:60px;width:164px;height:27px;background:linear-gradient(#f0f3fe,#e2e5fb 50%,#d6dbf7);border:1px solid #b4c4e4;border-radius:3px;box-shadow:0 1px 2px rgba(0,0,0,.25);"></div>
<div style="left:668px;top:60px;width:28px;height:27px;background:linear-gradient(#3990e0,#1a64b4);border-radius:3px 0 0 3px;"></div>
<svg style="left:672px;top:63px" width="20" height="20"><circle cx="9.600" cy="10.100" r="7.600" fill="none" stroke="#dfeaf9" stroke-width="2.800"/><path d="M6.800 6.200l6.200 3.900-6.200 3.900z" fill="#cfe0f5" stroke="#dfeaf9" stroke-width="1.200" stroke-linejoin="round"/><path d="M11 17.800h7.500v-2" stroke="#dfeaf9" stroke-width="2.400" fill="none"/></svg>
<svg style="left:702px;top:64px" width="20" height="18"><defs><linearGradient id="ug" x1="0" y1="0" x2="0" y2="1"><stop offset="0" stop-color="#0f58bc"/><stop offset="1" stop-color="#00a4e8"/></linearGradient></defs><path d="M9.500 .8C12 .8 13.700 3 13.700 5.800 13.700 8 12.800 9.500 11.700 10.300 13 12.800 17 13 18 17H1C2 13 6 12.800 7.300 10.300 6.200 9.500 5.300 8 5.300 5.800 5.300 3 7 .8 9.500 .8z" fill="url(#ug)"/></svg>
<svg style="left:733px;top:65px" width="18" height="18"><circle cx="8.100" cy="7.700" r="5.200" fill="none" stroke="#6f8db0" stroke-width="2.400"/><path d="M12 11.800l3.800 3.800" stroke="#6f8db0" stroke-width="2.600" stroke-linecap="round"/></svg>
<svg style="left:767px;top:65px" width="13" height="18"><defs><linearGradient id="bg1" x1="0" y1="0" x2="0" y2="1"><stop offset="0" stop-color="#a4b8ce"/><stop offset="1" stop-color="#6a86a8"/></linearGradient></defs><path d="M8.800 .8L3.200 9.300H5.800L4.600 11.400H1L6 16.800 11.600 11.400H8.400L10.600 7.600H7.200L9.600 .8z" fill="url(#bg1)"/></svg>
<svg style="left:796px;top:64px" width="18" height="20"><defs><linearGradient id="lg1" x1="0" y1="0" x2="0" y2="1"><stop offset="0" stop-color="#1c8ce0"/><stop offset="1" stop-color="#00a8e8"/></linearGradient></defs><path d="M2.200 8V7A3.600 3.600 0 0 1 9.400 7V9.500" fill="none" stroke="#0f5cbc" stroke-width="2.200"/><rect x="5" y="9.100" width="11" height="7.800" fill="url(#lg1)"/><rect x="9.800" y="11.600" width="1.400" height="1.400" fill="#fff"/><rect x="9.800" y="13.800" width="1.400" height="1.400" fill="#fff"/></svg>
<div style="left:820px;top:61px;width:1px;height:25px;background:#fff;border-left:1px solid #c0cce4;width:2px"></div>
<svg style="left:824px;top:72px" width="6" height="4"><path d="M0 0h6L3 3.500z" fill="#7c8ca8"/></svg>
<div style="left:116px;top:282px;width:1039px;height:400px;background:#6475d6;border-radius:7px 7px 0 0;"></div>
<div style="left:117px;top:283px;width:1037px;height:29px;background:linear-gradient(#9bb6ed 0,#83a1e4 1.500px,#7b99e0 3px,#7996df 12px,#81a5e8 19px,#81a5e8 25px,#7893e1 28px,#7590e0 29px);border-radius:6px 6px 0 0;"></div>
<svg style="left:121px;top:288px" width="18" height="19"><path d="M8 7.500h2v6h1.500" stroke="#707070" fill="none" stroke-width="1"/><rect x="-3.200" y="-2.500" width="6.400" height="5" transform="translate(5.300,5.700) rotate(40)" fill="#f4e800" stroke="#000" stroke-width=".8"/><rect x="-2.800" y="-2" width="5.600" height="4" transform="translate(14,7.700) rotate(-42)" fill="#e00090" stroke="#000" stroke-width=".8"/><rect x="-2.800" y="-2" width="5.600" height="4" transform="translate(13,15) rotate(-42)" fill="#00c8d0" stroke="#000" stroke-width=".8"/></svg>
<div class="t" style="left:142px;top:291.5px;font-family:'Liberation Sans','Noto Sans CJK SC',sans-serif;color:#e4ebfc;font-weight:bold;font-size:13.500px;">组装单</div>
<div style="left:1083px;top:288px;width:19px;height:20px;background:linear-gradient(135deg,#8aa0e6,#6d88de 55%,#7a94e4);border:1px solid #c8d4f6;border-radius:3px;"></div>
<div style="left:1087px;top:300px;width:7px;height:3px;background:#b0b8e8;"></div>
<div style="left:1106px;top:288px;width:19px;height:20px;background:linear-gradient(135deg,#7a98ea,#4a6ade 55%,#5a7ce6);border:1px solid #c8d4f6;border-radius:3px;"></div>
<div style="left:1110px;top:292px;width:11px;height:12px;border:1px solid #fff;border-top:3px solid #fff;"></div>
<div style="left:1129px;top:288px;width:19px;height:20px;background:linear-gradient(135deg,#c88890,#a85868 55%,#b06878);border:1px solid #c8d4f6;border-radius:3px;"></div>
<svg style="left:1129px;top:288px" width="19" height="20"><path d="M4.500 5 L14.5 15 M14.5 5 L4.500 15" stroke="#fff" stroke-width="2" fill="none"/></svg>
<div style="left:120px;top:312px;width:1031px;height:34px;background:#e4e8da;"></div>
<svg style="left:134px;top:326px" width="17" height="9"><g transform="translate(17,0) scale(-1,1)"><rect x="0" y="0" width="4" height="9" fill="#000"/><rect x="1.500" y="2" width="1.200" height="5" fill="#00e0f0"/><path d="M4.500 1.500H11l5 2-4.500 1.200 1.500 1-1.200 1.500-2 1.300H4.500z" fill="#fff" stroke="#000" stroke-width="1.100"/><path d="M8 4.700h3.500M8 6.200h4" stroke="#000" stroke-width=".9"/></g></svg>
<div class="t" style="left:154px;top:323px;">前单<u>L</u></div>
<svg style="left:201px;top:326px" width="17" height="9"><rect x="0" y="0" width="4" height="9" fill="#000"/><rect x="1.500" y="2" width="1.200" height="5" fill="#00e0f0"/><path d="M4.500 1.500H11l5 2-4.500 1.200 1.500 1-1.200 1.500-2 1.300H4.500z" fill="#fff" stroke="#000" stroke-width="1.100"/><path d="M8 4.700h3.500M8 6.200h4" stroke="#000" stroke-width=".9"/></svg>
<div class="t" style="left:221px;top:323px;">后单<u>N</u></div>
<svg style="left:271px;top:324px" width="13" height="12"><path d="M4.500 1h5.500v5.500h3l-5.800 5.500-5.700-5.500h3z" fill="#909080"/><path d="M3.500 0h5.500v5.500h3l-5.800 5.500L.5 5.500h3z" fill="#000"/></svg>
<div class="t" style="left:289px;top:323px;">操作<u>O</u></div>
<svg style="left:338px;top:322px" width="14" height="16"><path d="M1.500 .5h11.500v10.500l-4 4h-7.500z" fill="#fff" stroke="#000"/><path d="M13 11h-4v4" fill="none" stroke="#000"/><path d="M5 5.500h5.500v2.500h-2v3.500h-2.500z" fill="#c0c0c0"/><path d="M0 5.200h9M4.700 1.500v7.500" stroke="#0000f0" stroke-width="2.600"/><rect x="4" y="11.500" width="1.600" height="1.600" fill="#00e000"/></svg>
<div class="t" style="left:357px;top:323px;">打印<u>P</u></div>
<svg style="left:537px;top:322px" width="17" height="15"><path d="M1.200 8.200L3.200 7.200 6.200 10.700C8.700 6.200 11.700 3.200 16.200 1.200 11.700 4.700 8.700 9.200 6.700 14.200L5.200 14.200z" fill="#500000"/><path d="M.5 7.500L2.500 6.500 5.500 10C8 5.500 11 2.500 15.500 .5 11 4 8 8.500 6 13.500L4.500 13.500z" fill="#ff0000"/></svg>
<div class="t" style="left:557px;top:323px;">反审核<u>U</u></div>
<svg style="left:617px;top:322px" width="14" height="16"><path d="M1.500 .5h11.500v10.500l-4 4h-7.500z" fill="#fff" stroke="#000"/><path d="M13 11h-4v4" fill="none" stroke="#000"/><path d="M5 5.500h5.500v2.500h-2v3.500h-2.500z" fill="#c0c0c0"/><path d="M0 5.200h9M4.700 1.500v7.500" stroke="#0000f0" stroke-width="2.600"/><rect x="4" y="11.500" width="1.600" height="1.600" fill="#00e000"/></svg>
<div class="t" style="left:636px;top:323px;">新增<u>A</u></div>
<svg style="left:759px;top:322px" width="14" height="15"><rect x="8.500" y=".5" width="3.500" height="2" fill="#fff" stroke="#0000a0"/><rect x="8.500" y="4" width="1.500" height="11" fill="#000"/><rect x="10" y="4" width="4" height="11" fill="#808080"/><rect x="11.500" y="9" width="1" height="1" fill="#d0d0d0"/><circle cx="6.700" cy="5.200" r="1.200" fill="#000"/><path d="M7 6.500L5 9.500M3.500 7.500L7.500 8.500M5 9.500L7 11.500 6.500 14.500M5 9.500L3 11.500 3.500 12.500" stroke="#000" stroke-width="1.500" fill="none"/><path d="M0 9.500h1M2 9.500h1M0 12.500h1M2 12.500h1" stroke="#000"/></svg>
<div class="t" style="left:779px;top:323px;">返回<u>R</u></div>
<div style="left:120px;top:346px;width:1031px;height:66px;background:#fefaf0;"></div>
<div style="left:120px;top:412px;width:1031px;height:81px;background:#e8f8f4;"></div>
<div style="left:120px;top:493px;width:1031px;height:25px;background:#e0e0f8;"></div>
<div class="t" style="left:130px;top:349.5px;font-family:'Liberation Serif','Noto Serif CJK SC',serif;font-weight:700;font-size:21px;line-height:24px;height:24px;color:#5500cc;letter-spacing:4px">组装单</div>
<div style="left:338px;top:350px;width:69px;height:23px;border:2px solid #1010e0;border-radius:50%;"></div>
<div class="t" style="left:355px;top:355px;color:#f00000">已审核</div>
<div style="left:419px;top:355px;width:48px;height:15px;background:#316ac5;"></div>
<div class="t" style="left:420px;top:355px;color:#fff">单据日期</div>
<div class="sunk" style="left:479px;top:351px;width:114px;height:22px;background:#fff;"><div class="t ft ls" style="top:4px;left:3.500px;color:#aca899"><i>2012-10-24</i></div><div class="cb dis" style="right:0;top:1px;width:17px;height:19px"></div></div>
<div style="left:634px;top:355px;width:48px;height:15px;background:#316ac5;"></div>
<div class="t" style="left:634px;top:355px;color:#fff">单据编号</div>
<div class="sunk" style="left:704px;top:351px;width:141px;height:22px;background:#fff;"><div class="t" style="left:2px;top:4px;color:#000"><span style="letter-spacing:.08px"><i>GE-12-10-24-0001</i></span></div></div>
<div class="t" style="left:133px;top:392px;color:#000">材料仓库</div>
<div class="sunk" style="left:195px;top:388px;width:145px;height:22px;background:#fff;"><div class="t" style="left:1px;top:4px;color:#000">配件库</div></div>
<svg style="left:343px;top:394px" width="17" height="9"><path d="M1 1.500H11l5 2-4.500 1.200 1.500 1-1.200 1.500-2 1.300H1l2-3.500z" fill="#e6e2d4" stroke="#d8d4c4" stroke-width=".8"/></svg>
<div class="t" style="left:387px;top:392px;color:#000">成品仓库</div>
<div class="sunk" style="left:449px;top:388px;width:145px;height:22px;background:#fff;"><div class="t" style="left:1px;top:4px;color:#000">整车库</div></div>
<svg style="left:597px;top:394px" width="17" height="9"><path d="M1 1.500H11l5 2-4.500 1.200 1.500 1-1.200 1.500-2 1.300H1l2-3.500z" fill="#e6e2d4" stroke="#d8d4c4" stroke-width=".8"/></svg>
<div class="t" style="left:641px;top:392px;color:#000">生产车间</div>
<div class="sunk" style="left:703px;top:388px;width:144px;height:22px;background:#fff;"><div class="t" style="left:1px;top:4px;color:#000">沙滩车车间</div></div>
<svg style="left:851px;top:394px" width="17" height="9"><path d="M1 1.500H11l5 2-4.500 1.200 1.500 1-1.200 1.500-2 1.300H1l2-3.500z" fill="#e6e2d4" stroke="#d8d4c4" stroke-width=".8"/></svg>
<div class="t" style="left:895px;top:392px;color:#008080">相关单号</div>
<div class="sunk" style="left:957px;top:388px;width:143px;height:22px;background:#fff;"><div class="t" style="left:2px;top:4px;color:#000080"><i>2012-098</i>单</div></div>
<div class="t" style="left:133px;top:420px;color:#000">物资名称</div>
<div class="sunk" style="left:195px;top:415px;width:144px;height:22px;background:#e8f4fc;"><div class="t ls" style="left:3px;top:4px;color:#000"><i>200-7</i>川崎沙滩车 &nbsp;高</div><div class="cb" style="right:0;top:1px;width:17px;height:19px"></div></div>
<svg style="left:344px;top:422px" width="17" height="9"><rect x="0" y="0" width="4" height="9" fill="#000"/><rect x="1.500" y="2" width="1.200" height="5" fill="#00e0f0"/><path d="M4.500 1.500H11l5 2-4.500 1.200 1.500 1-1.200 1.500-2 1.300H4.500z" fill="#fff" stroke="#000" stroke-width="1.100"/><path d="M8 4.700h3.500M8 6.200h4" stroke="#000" stroke-width=".9"/></svg>
<div class="t" style="left:387px;top:420px;color:#808000">引用单据</div>
<div class="flat" style="left:449px;top:416px;width:145px;height:21px;background:#fff;"></div>
<div class="t" style="left:641px;top:420px;color:#808000">货品编号</div>
<div class="flat" style="left:703px;top:415px;width:145px;height:21px;background:#fff;"><div class="t" style="left:0.5px;top:3px;color:#aca899"><i>A19-043</i></div></div>
<div class="t" style="left:903px;top:420px;color:#808000">单 位</div>
<div class="flat" style="left:957px;top:415px;width:145px;height:21px;background:#fff;"><div class="t" style="left:1px;top:3px;color:#aca899">辆</div></div>
<div class="t" style="left:141px;top:445px;color:#808000">规 格</div>
<div class="flat" style="left:195px;top:440px;width:145px;height:21px;background:#fff;"></div>
<div class="t" style="left:395px;top:445px;color:#000">单 价</div>
<div class="sunk" style="left:449px;top:440px;width:79px;height:22px;background:#fff;"><div class="t" style="left:2px;top:4px;color:#000"><i>3681.69</i></div></div>
<div class="t" style="left:536px;top:445px;color:#808000">元</div>
<div class="t" style="left:649px;top:445px;color:#000">数 量</div>
<div class="sunk" style="left:703px;top:440px;width:60px;height:22px;background:#fff;"><div class="t" style="left:2px;top:4px;color:#000"><i>45</i></div></div>
<div class="t" style="left:767px;top:445px;color:#000">辅量</div>
<div class="sunk" style="left:793px;top:440px;width:53px;height:22px;background:#fff;"><div class="t" style="left:2px;top:4px;color:#000">0</div></div>
<div class="t" style="left:895px;top:445px;color:#808000">物资金额</div>
<div class="flat" style="left:957px;top:441px;width:80px;height:21px;background:#fff;"><div class="t" style="left:2px;top:3px;color:#000080"><i>165676.05</i></div></div>
<div class="t" style="left:1044px;top:446px;color:#000">元</div>
<div class="t" style="left:133px;top:470px;color:#000">批次编号</div>
<div class="sunk" style="left:195px;top:465px;width:145px;height:22px;background:#fff;"><div class="t" style="left:2px;top:4px;color:#000">-</div></div>
<div class="t" style="left:387px;top:470px;color:#000">批次日期</div>
<div class="sunk" style="left:449px;top:467px;width:144px;height:22px;background:#fff;"><div class="t" style="left:5px;top:4px;color:#000"><span style="letter-spacing:.6px"><i>2012</i> 年<i>09</i> 月<i>07</i> 日</span></div></div>
<div class="t" style="left:639px;top:470px;color:#000">主物资库位</div>
<div class="sunk" style="left:705px;top:466px;width:144px;height:22px;background:#fff;"><div class="t" style="left:2px;top:4px;color:#000">-</div></div>
<div class="t" style="left:133px;top:497px;color:#000">生产日期</div>
<div class="sunk" style="left:195px;top:494px;width:145px;height:22px;background:#fff;"><div class="t ls" style="left:4px;top:4px;color:#000"><i>2012-10-23</i></div><div class="cb" style="right:0;top:1px;width:17px;height:19px"></div></div>
<div style="left:348px;top:505px;width:2px;height:2px;background:#0030e0"></div>
<div style="left:351px;top:505px;width:2px;height:2px;background:#0030e0"></div>
<div style="left:354px;top:505px;width:2px;height:2px;background:#0030e0"></div>
<div style="left:120px;top:518px;width:1031px;height:142px;background:#fff;"></div>
<div class="gc" style="left:122px;top:518px;width:49px;height:18px;background:#eee8d8;border-right:1px solid #9cc89c;border-bottom:1px solid #9cc89c;"><div style="left:0;width:48px;top:0px;line-height:14px;text-align:center;color:#000080"></div></div>
<div class="gc" style="left:171px;top:518px;width:243px;height:18px;background:#fff;border-right:1px solid #9cc89c;border-bottom:1px solid #9cc89c;"><div style="left:0;width:242px;top:0px;line-height:14px;text-align:left;padding-left:4px;color:#000"></div></div>
<div class="gc" style="left:414px;top:518px;width:63px;height:18px;background:#fff;border-right:1px solid #9cc89c;border-bottom:1px solid #9cc89c;"><div style="left:0;width:62px;top:0px;line-height:14px;text-align:left;padding-left:3px;color:#000"></div></div>
<div class="gc" style="left:477px;top:518px;width:72px;height:18px;background:#eef2ea;border-right:1px solid #9cc89c;border-bottom:1px solid #9cc89c;"><div style="left:0;width:71px;top:0px;line-height:14px;text-align:right;padding-right:4px;color:#000"></div></div>
<div class="gc" style="left:549px;top:518px;width:72px;height:18px;background:#fff;border-right:1px solid #9cc89c;border-bottom:1px solid #9cc89c;"><div style="left:0;width:71px;top:0px;line-height:14px;text-align:right;padding-right:4px;color:#000"><i>3780</i></div></div>
<div class="gc" style="left:621px;top:518px;width:83px;height:18px;background:#fff;border-right:1px solid #9cc89c;border-bottom:1px solid #9cc89c;"><div style="left:0;width:82px;top:0px;line-height:14px;text-align:right;padding-right:4px;color:#000"></div></div>
<div style="left:704px;top:518px;width:102px;height:18px;background:#fff;border-right:1px solid #9cc89c;border-bottom:1px solid #9cc89c;"></div>
<div style="left:806px;top:518px;width:150px;height:18px;background:#fff;border-right:1px solid #9cc89c;border-bottom:1px solid #9cc89c;overflow:hidden;"></div>
<div style="left:713px;top:518px;width:1px;height:18px;background:#a0a0a0;"></div>
<div style="left:722px;top:518px;width:1px;height:18px;background:#a0a0a0;"></div>
<div style="left:731px;top:518px;width:1px;height:18px;background:#000;"></div>
<div style="left:740px;top:518px;width:1px;height:18px;background:#a0a0a0;"></div>
<div style="left:749px;top:518px;width:1px;height:18px;background:#a0a0a0;"></div>
<div style="left:758px;top:518px;width:1px;height:18px;background:#000;"></div>
<div style="left:767px;top:518px;width:1px;height:18px;background:#a0a0a0;"></div>
<div style="left:776px;top:518px;width:1px;height:18px;background:#a0a0a0;"></div>
<div style="left:785px;top:518px;width:1px;height:18px;background:#f00000;"></div>
<div style="left:794px;top:518px;width:1px;height:18px;background:#a0a0a0;"></div>
<div style="left:732px;top:518px;width:8px;height:18px;overflow:hidden;"><div style="left:0;width:8px;top:0px;line-height:14px;text-align:center;color:#0000e0;font-weight:bold;">1</div></div>
<div style="left:741px;top:518px;width:8px;height:18px;overflow:hidden;"><div style="left:0;width:8px;top:0px;line-height:14px;text-align:center;color:#0000e0;font-weight:bold;">6</div></div>
<div style="left:750px;top:518px;width:8px;height:18px;overflow:hidden;"><div style="left:0;width:8px;top:0px;line-height:14px;text-align:center;color:#000;">5</div></div>
<div style="left:759px;top:518px;width:8px;height:18px;overflow:hidden;"><div style="left:0;width:8px;top:0px;line-height:14px;text-align:center;color:#000;">6</div></div>
<div style="left:768px;top:518px;width:8px;height:18px;overflow:hidden;"><div style="left:0;width:8px;top:0px;line-height:14px;text-align:center;color:#000;">7</div></div>
<div style="left:777px;top:518px;width:8px;height:18px;overflow:hidden;"><div style="left:0;width:8px;top:0px;line-height:14px;text-align:center;color:#000;">6</div></div>
<div style="left:786px;top:518px;width:8px;height:18px;overflow:hidden;"><div style="left:0;width:8px;top:0px;line-height:14px;text-align:center;color:#f00000;">0</div></div>
<div style="left:795px;top:518px;width:11px;height:18px;overflow:hidden;"><div style="left:0;width:11px;top:0px;line-height:14px;text-align:center;color:#f00000;">5</div></div>
<div style="left:120px;top:536px;width:1014px;height:18px;background:linear-gradient(#f0efe8,#fdfdfb 50%,#f8f7f2);"></div>
<div style="left:122px;top:539px;width:14px;height:13px;background:linear-gradient(135deg,#d0dcfe,#b4c6f6);border:1px solid #f4f7ff;border-radius:2px;box-shadow:0 1px 0 #9fb3e6,1px 0 0 #c8d4f6,-1px 0 0 #dfe6fb;"></div>
<svg style="left:125px;top:541px" width="8" height="10"><path d="M6.300 .8L2 4.800l4.300 4" stroke="#4d6185" stroke-width="2.300" fill="none"/></svg>
<div style="left:139px;top:539px;width:15px;height:13px;background:linear-gradient(135deg,#d0dcfe,#b4c6f6);border:1px solid #f4f7ff;border-radius:2px;box-shadow:0 1px 0 #9fb3e6,1px 0 0 #c8d4f6,-1px 0 0 #dfe6fb;"></div>
<svg style="left:142px;top:542px" width="9" height="7"><path d="M1 0v7M3.200 0v7M5.400 0v7M7.600 0v7" stroke="#8ea6ea" stroke-width="1"/></svg>
<div style="left:1134px;top:539px;width:14px;height:13px;background:linear-gradient(135deg,#d0dcfe,#b4c6f6);border:1px solid #f4f7ff;border-radius:2px;box-shadow:0 1px 0 #9fb3e6,1px 0 0 #c8d4f6,-1px 0 0 #dfe6fb;"></div>
<svg style="left:1137px;top:541px" width="8" height="10"><path d="M1.700 .8L6 4.800l-4.300 4" stroke="#4d6185" stroke-width="2.300" fill="none"/></svg>
<div style="left:1133px;top:554px;width:17px;height:106px;background:linear-gradient(90deg,#f0efe8,#fdfdfb 50%,#f4f3ee);"></div>
<div class="gc" style="left:122px;top:554px;width:49px;height:27px;background:#e0f0f8;border-right:1px solid #9cc89c;border-bottom:1px solid #9cc89c;"><div style="left:0;width:48px;top:0px;line-height:14px;text-align:center;color:#000080">1</div></div>
<div class="gc" style="left:171px;top:554px;width:243px;height:27px;background:#ccffff;border-right:1px solid #9cc89c;border-bottom:1px solid #9cc89c;"><div style="left:0;width:242px;top:0px;line-height:14px;text-align:left;padding-left:4px;color:#0000e0"><i>200-7</i>立机川崎车架及精加工</div></div>
<div class="gc" style="left:414px;top:554px;width:63px;height:27px;background:#ccffff;border-right:1px solid #9cc89c;border-bottom:1px solid #9cc89c;"><div style="left:0;width:62px;top:0px;line-height:14px;text-align:left;padding-left:3px;color:#000">套</div></div>
<div class="gc" style="left:477px;top:554px;width:72px;height:27px;background:#ccffff;border-right:1px solid #9cc89c;border-bottom:1px solid #9cc89c;"><div style="left:0;width:71px;top:0px;line-height:14px;text-align:right;padding-right:4px;color:#f00000"><i>-91</i></div></div>
<div class="gc" style="left:549px;top:554px;width:72px;height:27px;background:#ccffff;border-right:1px solid #9cc89c;border-bottom:1px solid #9cc89c;"><div style="left:0;width:71px;top:0px;line-height:14px;text-align:right;padding-right:4px;color:#000"><i>45</i></div></div>
<div class="gc" style="left:621px;top:554px;width:83px;height:27px;background:#ccffff;border-right:1px solid #9cc89c;border-bottom:1px solid #9cc89c;"><div style="left:0;width:82px;top:0px;line-height:14px;text-align:right;padding-right:4px;color:#000"><i>600</i></div></div>
<div style="left:704px;top:554px;width:102px;height:27px;background:#ccffff;border-right:1px solid #9cc89c;border-bottom:1px solid #9cc89c;"></div>
<div style="left:806px;top:554px;width:150px;height:27px;background:#ccffff;border-right:1px solid #9cc89c;border-bottom:1px solid #9cc89c;overflow:hidden;"><div style="left:4px;top:-12px;line-height:19px;">前载沿架。电池下头。后<br>货架。<i>-7</i>仪表</div></div>
<div style="left:713px;top:554px;width:1px;height:27px;background:#a0a0a0;"></div>
<div style="left:722px;top:554px;width:1px;height:27px;background:#a0a0a0;"></div>
<div style="left:731px;top:554px;width:1px;height:27px;background:#000;"></div>
<div style="left:740px;top:554px;width:1px;height:27px;background:#a0a0a0;"></div>
<div style="left:749px;top:554px;width:1px;height:27px;background:#a0a0a0;"></div>
<div style="left:758px;top:554px;width:1px;height:27px;background:#000;"></div>
<div style="left:767px;top:554px;width:1px;height:27px;background:#a0a0a0;"></div>
<div style="left:776px;top:554px;width:1px;height:27px;background:#a0a0a0;"></div>
<div style="left:785px;top:554px;width:1px;height:27px;background:#f00000;"></div>
<div style="left:794px;top:554px;width:1px;height:27px;background:#a0a0a0;"></div>
<div style="left:741px;top:554px;width:8px;height:27px;overflow:hidden;"><div style="left:0;width:8px;top:0px;line-height:14px;text-align:center;color:#0000e0;font-weight:bold;">2</div></div>
<div style="left:750px;top:554px;width:8px;height:27px;overflow:hidden;"><div style="left:0;width:8px;top:0px;line-height:14px;text-align:center;color:#000;">7</div></div>
<div style="left:759px;top:554px;width:8px;height:27px;overflow:hidden;"><div style="left:0;width:8px;top:0px;line-height:14px;text-align:center;color:#000;">0</div></div>
<div style="left:768px;top:554px;width:8px;height:27px;overflow:hidden;"><div style="left:0;width:8px;top:0px;line-height:14px;text-align:center;color:#000;">0</div></div>
<div style="left:777px;top:554px;width:8px;height:27px;overflow:hidden;"><div style="left:0;width:8px;top:0px;line-height:14px;text-align:center;color:#000;">0</div></div>
<div style="left:786px;top:554px;width:8px;height:27px;overflow:hidden;"><div style="left:0;width:8px;top:0px;line-height:14px;text-align:center;color:#f00000;">0</div></div>
<div style="left:795px;top:554px;width:11px;height:27px;overflow:hidden;"><div style="left:0;width:11px;top:0px;line-height:14px;text-align:center;color:#f00000;">0</div></div>
<div class="gc" style="left:122px;top:581px;width:49px;height:23px;background:#e0f0f8;border-right:1px solid #9cc89c;border-bottom:1px solid #9cc89c;"><div style="left:0;width:48px;top:4px;line-height:14px;text-align:center;color:#000080">2</div></div>
<div class="gc" style="left:171px;top:581px;width:243px;height:23px;background:#ffff66;border-right:1px solid #9cc89c;border-bottom:1px solid #9cc89c;"><div style="left:0;width:242px;top:4px;line-height:14px;text-align:left;padding-left:4px;color:#000"></div></div>
<div class="gc" style="left:414px;top:581px;width:63px;height:23px;background:#ffff66;border-right:1px solid #9cc89c;border-bottom:1px solid #9cc89c;"><div style="left:0;width:62px;top:4px;line-height:14px;text-align:left;padding-left:3px;color:#000"></div></div>
<div class="gc" style="left:477px;top:581px;width:72px;height:23px;background:#eef2ea;border-right:1px solid #9cc89c;border-bottom:1px solid #9cc89c;"><div style="left:0;width:71px;top:4px;line-height:14px;text-align:right;padding-right:4px;color:#000"></div></div>
<div class="gc" style="left:549px;top:581px;width:72px;height:23px;background:#ffff66;border-right:1px solid #9cc89c;border-bottom:1px solid #9cc89c;"><div style="left:0;width:71px;top:4px;line-height:14px;text-align:right;padding-right:4px;color:#000"></div></div>
<div class="gc" style="left:621px;top:581px;width:83px;height:23px;background:#ffff66;border-right:1px solid #9cc89c;border-bottom:1px solid #9cc89c;"><div style="left:0;width:82px;top:4px;line-height:14px;text-align:right;padding-right:4px;color:#000"></div></div>
<div style="left:704px;top:581px;width:102px;height:23px;background:#ffff66;border-right:1px solid #9cc89c;border-bottom:1px solid #9cc89c;"></div>
<div style="left:806px;top:581px;width:150px;height:23px;background:#ffff66;border-right:1px solid #9cc89c;border-bottom:1px solid #9cc89c;overflow:hidden;"></div>
<div style="left:291px;top:581px;width:122px;height:13px;background:#fff;"></div>
<div class="t" style="left:175px;top:585px;"><i>150CC</i>立机电. 倒 发动机 &nbsp; <i>CG</i></div>
<div style="left:414px;top:581px;width:62px;height:13px;background:#fff;"></div>
<div class="t" style="left:417px;top:585px;">台</div>
<div style="left:549px;top:581px;width:71px;height:13px;background:#fff;"></div>
<div class="t" style="left:549px;top:585px;width:67px;text-align:right"><i>25</i></div>
<div style="left:621px;top:581px;width:82px;height:13px;background:#fff;"></div>
<div class="t" style="left:621px;top:585px;width:78px;text-align:right"><i>950</i></div>
<div style="left:704px;top:581px;width:101px;height:13px;background:#fff;"></div>
<div style="left:806px;top:581px;width:75px;height:13px;background:#fff;border-radius:0 0 3px 0"></div>
<div style="left:713px;top:581px;width:1px;height:23px;background:#a0a0a0;"></div>
<div style="left:722px;top:581px;width:1px;height:23px;background:#a0a0a0;"></div>
<div style="left:731px;top:581px;width:1px;height:23px;background:#000;"></div>
<div style="left:740px;top:581px;width:1px;height:23px;background:#a0a0a0;"></div>
<div style="left:749px;top:581px;width:1px;height:23px;background:#a0a0a0;"></div>
<div style="left:758px;top:581px;width:1px;height:23px;background:#000;"></div>
<div style="left:767px;top:581px;width:1px;height:23px;background:#a0a0a0;"></div>
<div style="left:776px;top:581px;width:1px;height:23px;background:#a0a0a0;"></div>
<div style="left:785px;top:581px;width:1px;height:23px;background:#f00000;"></div>
<div style="left:794px;top:581px;width:1px;height:23px;background:#a0a0a0;"></div>
<div style="left:741px;top:581px;width:8px;height:23px;overflow:hidden;"><div style="left:0;width:8px;top:4px;line-height:14px;text-align:center;color:#0000e0;font-weight:bold;">2</div></div>
<div style="left:750px;top:581px;width:8px;height:23px;overflow:hidden;"><div style="left:0;width:8px;top:4px;line-height:14px;text-align:center;color:#000;">3</div></div>
<div style="left:759px;top:581px;width:8px;height:23px;overflow:hidden;"><div style="left:0;width:8px;top:4px;line-height:14px;text-align:center;color:#000;">7</div></div>
<div style="left:768px;top:581px;width:8px;height:23px;overflow:hidden;"><div style="left:0;width:8px;top:4px;line-height:14px;text-align:center;color:#000;">5</div></div>
<div style="left:777px;top:581px;width:8px;height:23px;overflow:hidden;"><div style="left:0;width:8px;top:4px;line-height:14px;text-align:center;color:#000;">0</div></div>
<div style="left:786px;top:581px;width:8px;height:23px;overflow:hidden;"><div style="left:0;width:8px;top:4px;line-height:14px;text-align:center;color:#f00000;">0</div></div>
<div style="left:795px;top:581px;width:11px;height:23px;overflow:hidden;"><div style="left:0;width:11px;top:4px;line-height:14px;text-align:center;color:#f00000;">0</div></div>
<div class="gc" style="left:122px;top:604px;width:49px;height:12px;background:#e0f0f8;border-right:1px solid #9cc89c;border-bottom:1px solid #9cc89c;"><div style="left:0;width:48px;top:4px;line-height:14px;text-align:center;color:#000080">3</div></div>
<div class="gc" style="left:171px;top:604px;width:243px;height:12px;background:#f4fcfc;border-right:1px solid #9cc89c;border-bottom:1px solid #9cc89c;"><div style="left:0;width:242px;top:4px;line-height:14px;text-align:left;padding-left:4px;color:#000"><i>200-7</i>立机川崎前叉总成</div></div>
<div class="gc" style="left:414px;top:604px;width:63px;height:12px;background:#f4fcfc;border-right:1px solid #9cc89c;border-bottom:1px solid #9cc89c;"><div style="left:0;width:62px;top:4px;line-height:14px;text-align:left;padding-left:3px;color:#000">个</div></div>
<div class="gc" style="left:477px;top:604px;width:72px;height:12px;background:#eef2ea;border-right:1px solid #9cc89c;border-bottom:1px solid #9cc89c;"><div style="left:0;width:71px;top:4px;line-height:14px;text-align:right;padding-right:4px;color:#000"></div></div>
<div class="gc" style="left:549px;top:604px;width:72px;height:12px;background:#f4fcfc;border-right:1px solid #9cc89c;border-bottom:1px solid #9cc89c;"><div style="left:0;width:71px;top:4px;line-height:14px;text-align:right;padding-right:4px;color:#000"></div></div>
<div class="gc" style="left:621px;top:604px;width:83px;height:12px;background:#f4fcfc;border-right:1px solid #9cc89c;border-bottom:1px solid #9cc89c;"><div style="left:0;width:82px;top:4px;line-height:14px;text-align:right;padding-right:4px;color:#000"></div></div>
<div style="left:704px;top:604px;width:102px;height:12px;background:#f4fcfc;border-right:1px solid #9cc89c;border-bottom:1px solid #9cc89c;"></div>
<div style="left:806px;top:604px;width:150px;height:12px;background:#f4fcfc;border-right:1px solid #9cc89c;border-bottom:1px solid #9cc89c;overflow:hidden;"></div>
<div style="left:713px;top:604px;width:1px;height:12px;background:#a0a0a0;"></div>
<div style="left:722px;top:604px;width:1px;height:12px;background:#a0a0a0;"></div>
<div style="left:731px;top:604px;width:1px;height:12px;background:#000;"></div>
<div style="left:740px;top:604px;width:1px;height:12px;background:#a0a0a0;"></div>
<div style="left:749px;top:604px;width:1px;height:12px;background:#a0a0a0;"></div>
<div style="left:758px;top:604px;width:1px;height:12px;background:#000;"></div>
<div style="left:767px;top:604px;width:1px;height:12px;background:#a0a0a0;"></div>
<div style="left:776px;top:604px;width:1px;height:12px;background:#a0a0a0;"></div>
<div style="left:785px;top:604px;width:1px;height:12px;background:#f00000;"></div>
<div style="left:794px;top:604px;width:1px;height:12px;background:#a0a0a0;"></div>
<div class="gc" style="left:122px;top:636px;width:49px;height:13px;background:#e0f0f8;border-right:1px solid #9cc89c;border-bottom:1px solid #9cc89c;"><div style="left:0;width:48px;top:-6px;line-height:14px;text-align:center;color:#000080">4</div></div>
<div class="gc" style="left:171px;top:636px;width:243px;height:13px;background:#fff;border-right:1px solid #9cc89c;border-bottom:1px solid #9cc89c;"><div style="left:0;width:242px;top:-6px;line-height:14px;text-align:left;padding-left:4px;color:#000"><i>200-7</i>立机川崎排气管</div></div>
<div class="gc" style="left:414px;top:636px;width:63px;height:13px;background:#fff;border-right:1px solid #9cc89c;border-bottom:1px solid #9cc89c;"><div style="left:0;width:62px;top:-6px;line-height:14px;text-align:left;padding-left:3px;color:#000">支</div></div>
<div class="gc" style="left:477px;top:636px;width:72px;height:13px;background:#eef2ea;border-right:1px solid #9cc89c;border-bottom:1px solid #9cc89c;"><div style="left:0;width:71px;top:-6px;line-height:14px;text-align:right;padding-right:4px;color:#f00000"><i>-48</i></div></div>
<div class="gc" style="left:549px;top:636px;width:72px;height:13px;background:#fff;border-right:1px solid #9cc89c;border-bottom:1px solid #9cc89c;"><div style="left:0;width:71px;top:-6px;line-height:14px;text-align:right;padding-right:4px;color:#000"><i>45</i></div></div>
<div class="gc" style="left:621px;top:636px;width:83px;height:13px;background:#fff;border-right:1px solid #9cc89c;border-bottom:1px solid #9cc89c;"><div style="left:0;width:82px;top:-6px;line-height:14px;text-align:right;padding-right:4px;color:#000"><i>65</i></div></div>
<div style="left:704px;top:636px;width:102px;height:13px;background:#fff;border-right:1px solid #9cc89c;border-bottom:1px solid #9cc89c;"></div>
<div style="left:806px;top:636px;width:150px;height:13px;background:#fff;border-right:1px solid #9cc89c;border-bottom:1px solid #9cc89c;overflow:hidden;"><div style="left:4px;top:-6px;line-height:14px;">电镀类</div></div>
<div style="left:713px;top:636px;width:1px;height:13px;background:#a0a0a0;"></div>
<div style="left:722px;top:636px;width:1px;height:13px;background:#a0a0a0;"></div>
<div style="left:731px;top:636px;width:1px;height:13px;background:#000;"></div>
<div style="left:740px;top:636px;width:1px;height:13px;background:#a0a0a0;"></div>
<div style="left:749px;top:636px;width:1px;height:13px;background:#a0a0a0;"></div>
<div style="left:758px;top:636px;width:1px;height:13px;background:#000;"></div>
<div style="left:767px;top:636px;width:1px;height:13px;background:#a0a0a0;"></div>
<div style="left:776px;top:636px;width:1px;height:13px;background:#a0a0a0;"></div>
<div style="left:785px;top:636px;width:1px;height:13px;background:#f00000;"></div>
<div style="left:794px;top:636px;width:1px;height:13px;background:#a0a0a0;"></div>
<div style="left:750px;top:636px;width:8px;height:13px;overflow:hidden;"><div style="left:0;width:8px;top:-6px;line-height:14px;text-align:center;color:#000;">2</div></div>
<div style="left:759px;top:636px;width:8px;height:13px;overflow:hidden;"><div style="left:0;width:8px;top:-6px;line-height:14px;text-align:center;color:#000;">9</div></div>
<div style="left:768px;top:636px;width:8px;height:13px;overflow:hidden;"><div style="left:0;width:8px;top:-6px;line-height:14px;text-align:center;color:#000;">2</div></div>
<div style="left:777px;top:636px;width:8px;height:13px;overflow:hidden;"><div style="left:0;width:8px;top:-6px;line-height:14px;text-align:center;color:#000;">5</div></div>
<div style="left:786px;top:636px;width:8px;height:13px;overflow:hidden;"><div style="left:0;width:8px;top:-6px;line-height:14px;text-align:center;color:#f00000;">0</div></div>
<div style="left:795px;top:636px;width:11px;height:13px;overflow:hidden;"><div style="left:0;width:11px;top:-6px;line-height:14px;text-align:center;color:#f00000;">0</div></div>
<div class="gc" style="left:122px;top:649px;width:49px;height:20px;background:#e0f0f8;border-right:1px solid #9cc89c;border-bottom:1px solid #9cc89c;"><div style="left:0;width:48px;top:5px;line-height:14px;text-align:center;color:#000080">5</div></div>
<div class="gc" style="left:171px;top:649px;width:243px;height:20px;background:#f4fcfc;border-right:1px solid #9cc89c;border-bottom:1px solid #9cc89c;"><div style="left:0;width:242px;top:5px;line-height:14px;text-align:left;padding-left:4px;color:#000"><i>910mm</i>后桥总成 ( <i>110</i> )</div></div>
<div class="gc" style="left:414px;top:649px;width:63px;height:20px;background:#f4fcfc;border-right:1px solid #9cc89c;border-bottom:1px solid #9cc89c;"><div style="left:0;width:62px;top:5px;line-height:14px;text-align:left;padding-left:3px;color:#000">只</div></div>
<div class="gc" style="left:477px;top:649px;width:72px;height:20px;background:#eef2ea;border-right:1px solid #9cc89c;border-bottom:1px solid #9cc89c;"><div style="left:0;width:71px;top:5px;line-height:14px;text-align:right;padding-right:4px;color:#f00000"><i>-666</i></div></div>
<div class="gc" style="left:549px;top:649px;width:72px;height:20px;background:#f4fcfc;border-right:1px solid #9cc89c;border-bottom:1px solid #9cc89c;"><div style="left:0;width:71px;top:5px;line-height:14px;text-align:right;padding-right:4px;color:#000"><i>45</i></div></div>
<div class="gc" style="left:621px;top:649px;width:83px;height:20px;background:#f4fcfc;border-right:1px solid #9cc89c;border-bottom:1px solid #9cc89c;"><div style="left:0;width:82px;top:5px;line-height:14px;text-align:right;padding-right:4px;color:#000"><i>16</i></div></div>
<div style="left:704px;top:649px;width:102px;height:20px;background:#f4fcfc;border-right:1px solid #9cc89c;border-bottom:1px solid #9cc89c;"></div>
<div style="left:806px;top:649px;width:150px;height:20px;background:#f4fcfc;border-right:1px solid #9cc89c;border-bottom:1px solid #9cc89c;overflow:hidden;"><div style="left:4px;top:5px;line-height:14px;">欧标</div></div>
<div style="left:713px;top:649px;width:1px;height:20px;background:#a0a0a0;"></div>
<div style="left:722px;top:649px;width:1px;height:20px;background:#a0a0a0;"></div>
<div style="left:731px;top:649px;width:1px;height:20px;background:#000;"></div>
<div style="left:740px;top:649px;width:1px;height:20px;background:#a0a0a0;"></div>
<div style="left:749px;top:649px;width:1px;height:20px;background:#a0a0a0;"></div>
<div style="left:758px;top:649px;width:1px;height:20px;background:#000;"></div>
<div style="left:767px;top:649px;width:1px;height:20px;background:#a0a0a0;"></div>
<div style="left:776px;top:649px;width:1px;height:20px;background:#a0a0a0;"></div>
<div style="left:785px;top:649px;width:1px;height:20px;background:#f00000;"></div>
<div style="left:794px;top:649px;width:1px;height:20px;background:#a0a0a0;"></div>
<div style="left:759px;top:649px;width:8px;height:20px;overflow:hidden;"><div style="left:0;width:8px;top:5px;line-height:14px;text-align:center;color:#000;">7</div></div>
<div style="left:768px;top:649px;width:8px;height:20px;overflow:hidden;"><div style="left:0;width:8px;top:5px;line-height:14px;text-align:center;color:#000;">2</div></div>
<div style="left:777px;top:649px;width:8px;height:20px;overflow:hidden;"><div style="left:0;width:8px;top:5px;line-height:14px;text-align:center;color:#000;">0</div></div>
<div style="left:786px;top:649px;width:8px;height:20px;overflow:hidden;"><div style="left:0;width:8px;top:5px;line-height:14px;text-align:center;color:#f00000;">0</div></div>
<div style="left:795px;top:649px;width:11px;height:20px;overflow:hidden;"><div style="left:0;width:11px;top:5px;line-height:14px;text-align:center;color:#f00000;">0</div></div>
<div style="left:121px;top:518px;width:1px;height:18px;background:#9cc89c;"></div>
<div style="left:121px;top:554px;width:1px;height:106px;background:#9cc89c;"></div>
<div style="left:120px;top:610px;width:1030px;height:26px;background:#f0f0fa;"></div>
<svg style="left:131px;top:615px" width="13" height="16"><path d="M.5 .5h8l4 4v11h-12z" fill="#fff" stroke="#000"/><path d="M8.500 .5v4h4" fill="none" stroke="#000"/><path d="M4 8a3 3 0 0 1 5-1.500M9 10a3 3 0 0 1-5 1.500" stroke="#008000" stroke-width="1.600" fill="none"/><path d="M9 3.500v3.500h-3zM4 14.500v-3.500h3z" fill="#008000"/></svg>
<div class="t" style="left:151px;top:617px;color:#0030d0">业务信息</div>
<div class="t" style="left:206px;top:617px;color:#008000">库存<i>-+</i></div>
<div class="t" style="left:271px;top:617px;">业务量</div>
<div style="left:520px;top:616px;width:49px;height:15px;background:#a8b8ec;"></div>
<div class="t" style="left:521px;top:617px;color:#800000">执行情况</div>
<div style="left:120px;top:312px;width:1px;height:348px;background:#f6f6fc;"></div>
<div style="left:116px;top:312px;width:4px;height:348px;background:#6475d6;"></div>
<div style="left:1151px;top:312px;width:4px;height:348px;background:#6475d6;"></div>
<div style="left:1150px;top:312px;width:1px;height:348px;background:#b0a890;"></div>
</body></html>
